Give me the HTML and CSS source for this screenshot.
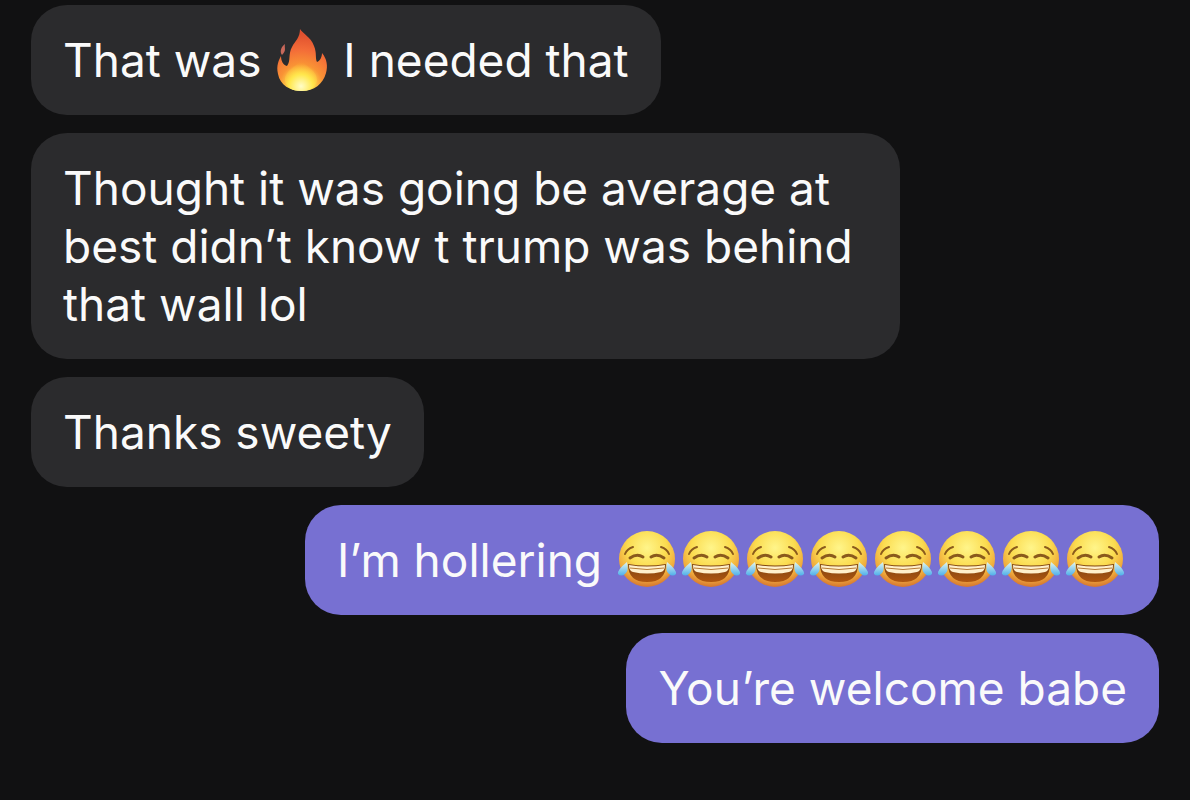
FILE: index.html
```html
<!DOCTYPE html>
<html lang="en">
<head>
<meta charset="utf-8">
<meta name="viewport" content="width=device-width, initial-scale=1">
<title>Messages</title>
<link rel="stylesheet" href="styles.css">
</head>
<body>
<svg class="defs" aria-hidden="true">
  <defs>
    <radialGradient id="skin" cx="50%" cy="30%" r="70%">
      <stop offset="0" stop-color="#fff58a"/>
      <stop offset=".5" stop-color="#fbdc50"/>
      <stop offset=".8" stop-color="#f0aa3c"/>
      <stop offset="1" stop-color="#d5752f"/>
    </radialGradient>
    <linearGradient id="mouth" x1="0" y1="0" x2="0" y2="1">
      <stop offset="0" stop-color="#7a4212"/>
      <stop offset="1" stop-color="#b0560f"/>
    </linearGradient>
    <linearGradient id="tear" x1="0" y1="0" x2="0" y2="1">
      <stop offset="0" stop-color="#e2f6f0"/>
      <stop offset="1" stop-color="#4fb0ea"/>
    </linearGradient>
    <radialGradient id="flame" gradientUnits="userSpaceOnUse" cx="31" cy="58" r="52">
      <stop offset="0" stop-color="#fffbb0"/>
      <stop offset=".22" stop-color="#ffe04c"/>
      <stop offset=".42" stop-color="#f99335"/>
      <stop offset=".7" stop-color="#f36c38"/>
      <stop offset="1" stop-color="#e0502f"/>
    </radialGradient>
    <radialGradient id="core" cx="50%" cy="85%" r="75%">
      <stop offset="0" stop-color="#fffdc8"/>
      <stop offset=".5" stop-color="#ffe74c"/>
      <stop offset="1" stop-color="#ffae35" stop-opacity="0"/>
    </radialGradient>
    <symbol id="joy" viewBox="0 0 64 64">
      <circle cx="32" cy="31" r="28" fill="url(#skin)"/>
      <g fill="none" stroke="#8a5a1c" stroke-linecap="round">
        <path stroke-width="2" d="M10 26q2-5 8-7M46 19q6 2 8 7"/>
        <path stroke-width="3" d="M15 30q7-5 13-1M36 29q6-4 13 1"/>
      </g>
      <path fill="url(#mouth)" d="M13 36q19 3 38 0 0 18-19 18T13 36z"/>
      <path fill="#fff0cc" d="M14 37q18 3 36 0 0 6-4 7-14 3-28 0-4-1-4-7z"/>
      <path fill="none" stroke="#b67a35" stroke-width="1" d="M15 40q17 3 34 0"/>
      <path fill="url(#tear)" d="M12 34q2 9-2 12-4 3-7 0-1-4 9-12zM52 34q-2 9 2 12 4 3 7 0 1-4-9-12z"/>
    </symbol>
    <symbol id="fire" viewBox="0 0 64 64">
      <path fill="url(#flame)" d="M30 1c2 4 11 8 14 17 3 7 1 12 3 16 3-1 5-5 5-9 5 6 6 13 4 20-3 11-12 18-24 18S10 57 8 46c-2-9 1-14 3-18 0 5 2 9 6 10 4-5 1-12 5-19 3-6 8-9 8-18z"/>
      <path fill="#c9685a" d="M12 27c-3-4 0-9 3-11-1 4 2 6-3 11z"/>
      <path fill="url(#core)" d="M31 31c4 8 17 11 16 22-2 7-8 10-16 10s-14-3-16-10c-1-11 12-14 16-22z"/>
    </symbol>
  </defs>
</svg>
<main class="chat">
  <p class="bubble received">That was <svg class="emoji fire" role="img" aria-label="Fire"><use href="#fire"/></svg> I needed that</p>
  <p class="bubble received">Thought it was going be average at best didn’t know t trump was behind that wall lol</p>
  <p class="bubble received">Thanks sweety</p>
  <p class="bubble sent">I’m hollering <span class="emoji-row" role="img" aria-label="Eight faces with tears of joy"><svg class="emoji"><use href="#joy"/></svg><svg class="emoji"><use href="#joy"/></svg><svg class="emoji"><use href="#joy"/></svg><svg class="emoji"><use href="#joy"/></svg><svg class="emoji"><use href="#joy"/></svg><svg class="emoji"><use href="#joy"/></svg><svg class="emoji"><use href="#joy"/></svg><svg class="emoji"><use href="#joy"/></svg></span></p>
  <p class="bubble sent">You’re welcome babe</p>
</main>
</body>
</html>
```
FILE: styles.css
```css
* { box-sizing: border-box; }

body {
  margin: 0;
  min-height: 100vh;
  background: #111112;
  color: #fafafa;
  font-family: Inter, "Liberation Sans", sans-serif;
  font-size: 46px;
  line-height: 58px;
}

.defs {
  position: absolute;
  width: 0;
  height: 0;
}

.chat {
  display: flex;
  flex-direction: column;
  gap: 18px;
  padding: 5px 31px;
}

.bubble {
  max-width: 77%;
  margin: 0;
  padding: 26px 32px;
  border-radius: 36px;
}

.received {
  align-self: flex-start;
  background: #2b2b2d;
}

.sent {
  align-self: flex-end;
  background: #7770d2;
}

.emoji {
  width: 64px;
  height: 64px;
  margin: -16px 0 -8px;
  vertical-align: middle;
}

.fire {
  margin-left: -4px;
  margin-right: -4px;
}

.emoji-row { white-space: nowrap; }
```
